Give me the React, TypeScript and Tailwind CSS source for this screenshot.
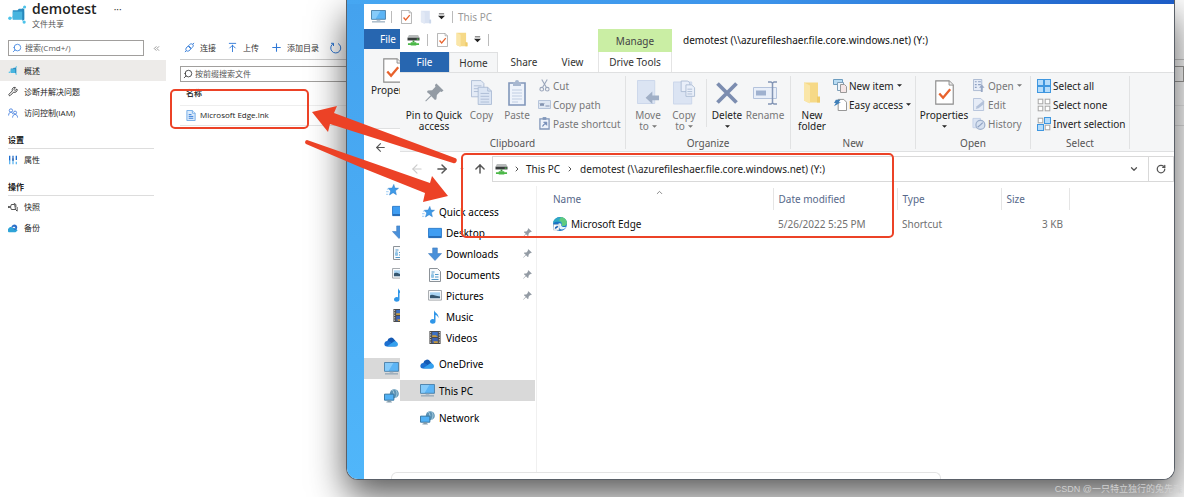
import type { ReactNode } from "react";
import {
  ArrowLeft,
  ArrowRight,
  ArrowUp,
  ArrowUpToLine,
  ChevronDown,
  ChevronRight,
  ChevronUp,
  ChevronsLeft,
  Plus,
  RotateCw,
  Search,
  Wrench,
} from "lucide-react";

type IconProps = { className?: string };

/* ---------- azure icons ---------- */

function FileShareIcon({ className }: IconProps) {
  return (
    <svg viewBox="0 0 20 20" className={className}>
      <path d="M3 14 8 10M15 4l2-2M15 16l2 2" stroke="#7fd3ee" strokeWidth="1" />
      <path d="M5 5.500h5l1.500-1.500H17v11H5z" fill="#2c8fc4" />
      <path d="M5 7h12v8.500H5z" fill="#48b5df" />
      <path d="M15 4h2v12h-2z" fill="#2787bb" />
      <circle cx="2" cy="14" r="1.800" fill="#4cc3ea" />
      <circle cx="17.500" cy="2" r="1.600" fill="#4cc3ea" />
      <circle cx="17" cy="18" r="1.700" fill="#4cc3ea" />
    </svg>
  );
}

function PeopleIcon({ className }: IconProps) {
  return (
    <svg viewBox="0 0 12 12" className={className} fill="none" stroke="#3f7bdc" strokeWidth="1">
      <circle cx="3.500" cy="3" r="2" />
      <path d="M.7 9c0-5 5-5 5.300-1.500" />
      <circle cx="8.500" cy="5.500" r="1.800" />
      <path d="M5.500 11.500c0-5 6-5 6 0" />
    </svg>
  );
}

function SlidersIcon({ className }: IconProps) {
  return (
    <svg viewBox="0 0 12 12" className={className} strokeWidth="1.600" fill="none">
      <path d="M2 1v6M6 1v2M10 1v5" stroke="#1f6fd0" />
      <path d="M2 7v4M6 5v6M10 8v3" stroke="#62b8f2" />
      <path d="M6 3v4" stroke="#174a9c" />
    </svg>
  );
}

function SnapshotIcon({ className }: IconProps) {
  return (
    <svg viewBox="0 0 12 12" className={className} fill="none" stroke="#333" strokeWidth="1">
      <path d="M1 6h2l1-3h4l1 6H4L3 6" />
      <path d="M7 1.500 9.500 3v3M9 9l2 2V6" />
      <circle cx="1" cy="6" r=".7" fill="#333" />
    </svg>
  );
}

function BackupIcon({ className }: IconProps) {
  return (
    <svg viewBox="0 0 12 12" className={className}>
      <path d="M1 11a2.600 2.600 0 0 1 0-4.600C2 4 4 4.500 5 5.500L10 7l1.500 2L9 11z" fill="#2fa4d8" />
      <path d="M4 5c1-4 6-4.500 7-.5.5 2-1 4-3 4L6 6.500h3C8.500 4 6 4 5 6z" fill="#2b6fc9" />
    </svg>
  );
}

function PlugIcon({ className }: IconProps) {
  return (
    <svg viewBox="0 0 12 12" className={className} fill="none" stroke="#2f78d6" strokeWidth="1">
      <path d="M1 11l1.500-1.500M9.500 2.500 11 1M2.500 9.500c-1.500-2 .5-4 2-5l3 3c-1 1.500-3 3.500-5 2z" />
      <path d="M5 4c1.500-2 3-2.500 4.500-1.500S9.500 6 8 7L5 4z" />
    </svg>
  );
}

function RefreshIcon({ className }: IconProps) {
  return (
    <svg viewBox="0 0 12 12" className={className} fill="none" stroke="#2f78d6" strokeWidth="1">
      <path d="M8 1.500a5 5 0 1 1-4.500 0M3.500 4V1.300H1" />
    </svg>
  );
}

function LinkFileIcon({ className }: IconProps) {
  return (
    <svg viewBox="0 0 10 12" className={className}>
      <path d="M.5.5h6l3 3v8h-9z" fill="#dcebfb" stroke="#6fa8e6" />
      <path d="M6.500.5v3h3" fill="#fff" stroke="#6fa8e6" />
      <path d="M2.500 5h3M2.500 7h5M2.500 9h5" stroke="#2f78d6" />
    </svg>
  );
}

/* ---------- explorer icons ---------- */

function PcIcon({ className }: IconProps) {
  return (
    <svg viewBox="0 0 16 14" className={className}>
      <path d="M.5.5h15v9.500H.5z" fill="#5cb4f5" stroke="#4a7fa8" />
      <path d="M1 1h9L5 9.500H1z" fill="#86cbfa" />
      <path d="M6 10.500h4v1H6z" fill="#9ab" />
      <path d="M1 12.300h14v1H1z" fill="#7793a8" />
    </svg>
  );
}

function CheckDocIcon({ className }: IconProps) {
  return (
    <svg viewBox="0 0 20 26" className={className}>
      <path d="M.8.8h14l4.400 4.400v20H.8z" fill="#fff" stroke="#8c8c8c" strokeWidth="1.200" />
      <path d="M14.800.8v4.400h4.400" fill="#eee" stroke="#8c8c8c" />
      <path d="m4.500 14 4 4.500 7.500-9" fill="none" stroke="#e8622c" strokeWidth="2.400" />
    </svg>
  );
}

function FolderIcon({ className, faded }: IconProps & { faded?: boolean }) {
  return (
    <svg viewBox="0 0 16 22" className={className}>
      <path d="M0 1h14v15h2v5H4L0 19z" fill={faded ? "#d9e2f2" : "#f6d987"} />
      <path d="M0 1l6 3v18l-6-3z" fill={faded ? "#e2e9f5" : "#fae6a8"} />
      <path d="M13 15h3v6h-3z" fill={faded ? "#cbd7ea" : "#efcb6a"} />
    </svg>
  );
}

function DriveIcon({ className }: IconProps) {
  return (
    <svg viewBox="0 0 14 13" className={className}>
      <path d="M2 1h10l1.500 3H.5z" fill="#b9bcbc" />
      <path d="M.5 4h13v3H.5z" fill="#383d3d" />
      <path d="M6 7h2v2H6z" fill="#3a9a3a" />
      <path d="M1 10h12v2H1zM4 9h6v3.500H4z" fill="#4cb848" />
      <path d="M10.500 5h2v1h-2z" fill="#5be05b" />
    </svg>
  );
}

function Caret({ className }: IconProps) {
  return (
    <svg viewBox="0 0 6 3" className={className ?? "h-[3px] w-[5px]"}>
      <path d="M0 0h6L3 3z" fill="currentColor" />
    </svg>
  );
}

function QatCaret() {
  return (
    <svg viewBox="0 0 8 7" className="h-[7px] w-[7px] text-[#222]">
      <path d="M1 0h6v1H1zM0 2.500h8L4 6.500z" fill="currentColor" />
    </svg>
  );
}

function PinIcon({ className }: IconProps) {
  return (
    <svg viewBox="0 0 20 20" className={className}>
      <path
        d="M12 .5 19.500 8l-2 1.500-1.500-.5-3.500 3.500-.5 4.500-1.500 1L6.700 14 1 19.500l-.7-.7L6 13 2 9.500l1-1.500 4.500-.5L11 4l-.5-2z"
        fill="#939ba4"
      />
    </svg>
  );
}

function CopyIcon({ className }: IconProps) {
  return (
    <svg viewBox="0 0 22 26" className={className} stroke="#a9b9d2" strokeWidth=".9">
      <path d="M.5.5h10l3 3v14H.5z" fill="#e4ebf6" />
      <path d="M3 6h8M3 9h8M3 12h8" />
      <path d="M7.500 7.500h10l4 4v14h-14z" fill="#dbe5f4" />
      <path d="M17.500 7.500v4h4M10 14h9M10 17h9M10 20h9M10 23h9" fill="none" />
    </svg>
  );
}

function PasteIcon({ className }: IconProps) {
  return (
    <svg viewBox="0 0 18 26" className={className}>
      <path d="M1 3h16v22H1z" fill="#eef3fb" stroke="#8197ba" strokeWidth="1.600" />
      <path d="M5 2h2a2 2 0 0 1 4 0h2v4H5z" fill="#a7b7d0" />
      <path d="M4 10h10M4 13h10M4 16h10M4 19h10M4 22h6" stroke="#c0cde2" />
    </svg>
  );
}

function CutIcon({ className }: IconProps) {
  return (
    <svg viewBox="0 0 12 14" className={className} fill="none" stroke="#9aa6bb" strokeWidth="1.200">
      <path d="M3 .5 8 9M9 .5 4 9" />
      <circle cx="3" cy="11" r="2" />
      <circle cx="9" cy="11" r="2" />
    </svg>
  );
}

function CopyPathIcon({ className }: IconProps) {
  return (
    <svg viewBox="0 0 13 9" className={className}>
      <path d="M.5.5h12v8H.5z" fill="#dfe7f3" stroke="#b6c4da" />
      <path d="m2 3 1 3 1-3 1 3 1-3M7.500 6h4" stroke="#6c7fa0" strokeWidth=".8" fill="none" />
    </svg>
  );
}

function PasteShortcutIcon({ className }: IconProps) {
  return (
    <svg viewBox="0 0 12 14" className={className}>
      <path d="M1 2h10v11H1z" fill="#eef3fb" stroke="#8197ba" strokeWidth="1.400" />
      <path d="M4 0h4v3H4z" fill="#8197ba" />
      <path d="M4 10.500c0-2 1-3 3-3M5 5.500h3.500V9z" fill="#6d87b3" stroke="#6d87b3" strokeWidth=".8" />
    </svg>
  );
}

function MoveToIcon({ className }: IconProps) {
  return (
    <svg viewBox="0 0 24 26" className={className}>
      <path d="M.5.5h18v24H.5z" fill="#dbe4f3" stroke="#cbd6ea" />
      <path d="M9 18.500 16 12v4h7v5h-7v4z" fill="#a0afc6" />
    </svg>
  );
}

function CopyToIcon({ className }: IconProps) {
  return (
    <svg viewBox="0 0 24 26" className={className}>
      <path d="M.5 1.500h19v23H.5z" fill="#dbe4f3" stroke="#cbd6ea" />
      <g fill="#e9eff9" stroke="#a9b9d2" strokeWidth=".9">
        <path d="M8.500.5h7l2 2v9h-9z" />
        <path d="M13.500 4.500h6l3 3v9h-9z" />
        <path d="M15 9h5M15 11.500h5M15 14h5" />
      </g>
    </svg>
  );
}

function DeleteIcon({ className }: IconProps) {
  return (
    <svg viewBox="0 0 22 22" className={className}>
      <path d="M1.500 1.500l19 19M20.500 1.500l-19 19" stroke="#7c8db0" strokeWidth="3.800" />
    </svg>
  );
}

function RenameIcon({ className }: IconProps) {
  return (
    <svg viewBox="0 0 25 24" className={className}>
      <path d="M.5 6.500h23v11H.5z" fill="#e9eff9" stroke="#b4c3dc" />
      <path d="M3 9.500h10v5H3z" fill="#9fb1cf" />
      <path
        d="M15 1h3l1.500 1L21 1h3M15 23h3l1.500-1 1.500 1h3M19.500 2v20"
        fill="none"
        stroke="#8395b5"
        strokeWidth="1.500"
      />
    </svg>
  );
}

function NewItemIcon({ className }: IconProps) {
  return (
    <svg viewBox="0 0 14 14" className={className}>
      <path d="M.5.5h9v5h-9z" fill="#b9dcf3" stroke="#6c9dc0" />
      <path d="M4.500 3.500h6v8h-6z" fill="#eef6fc" stroke="#7f9fb8" />
      <path d="M7.500 5.500h4l2 2v6h-6z" fill="#f5e6e6" stroke="#999" />
    </svg>
  );
}

function EasyAccessIcon({ className }: IconProps) {
  return (
    <svg viewBox="0 0 14 14" className={className}>
      <path d="M4.500 1.500h6l3 3v9h-9z" fill="#fff" stroke="#8c8c8c" />
      <path d="M2 2h5L5 4.500h2.500L0 9l2-3.500H0z" fill="#3f7fb8" />
    </svg>
  );
}

function OpenIcon({ className }: IconProps) {
  return (
    <svg viewBox="0 0 13 14" className={className}>
      <path d="M.5.5h9v12h-9z" fill="#e6ecf7" stroke="#a9b8d0" />
      <path d="M2 3h2M2 6h2M2 9h2M5.500 3h3M5.500 6h3" stroke="#8ea1c2" strokeWidth="1.200" />
      <path d="m9.500 6 3 3.500h-2V14h-2V9.500h-2z" fill="#97a7c4" />
    </svg>
  );
}

function EditIcon({ className }: IconProps) {
  return (
    <svg viewBox="0 0 13 14" className={className}>
      <path d="M.5.5h8l3 3v10H.5z" fill="#e6ecf7" stroke="#b4c2da" />
      <path d="m3 12 1-3 8-6.500v4L6 11z" fill="#b4c2da" />
    </svg>
  );
}

function HistoryIcon({ className }: IconProps) {
  return (
    <svg viewBox="0 0 14 14" className={className}>
      <path d="M.5 1.500h8v10h-8z" fill="#dbe4f3" stroke="#c3d0e6" />
      <circle cx="8.500" cy="8.500" r="4.800" fill="#d7e1f0" stroke="#9dafcb" strokeWidth="1.300" />
      <path d="m5.500 11 3-2.500L11 6" stroke="#8ea1c2" strokeWidth="1.300" fill="none" />
    </svg>
  );
}

const squares = [
  [0.5, 0.5],
  [7.5, 0.5],
  [0.5, 7.5],
  [7.5, 7.5],
];

function SelectIcon({ mode, className }: IconProps & { mode: "all" | "none" | "invert" }) {
  return (
    <svg viewBox="0 0 14 14" className={className}>
      {squares.map(([x, y], i) => {
        const on = mode === "all" || (mode === "invert" && (i === 1 || i === 2));
        const inset = on ? 0 : 0.7;
        return (
          <rect
            key={i}
            x={x + inset}
            y={y + inset}
            width={6 - inset * 2}
            height={6 - inset * 2}
            fill={on ? "#b5dcfb" : "#fff"}
            stroke={on ? "#3f97e0" : "#a6a6a6"}
          />
        );
      })}
    </svg>
  );
}

function StarIcon({ className }: IconProps) {
  return (
    <svg viewBox="0 0 15 14" className={className}>
      <path
        d="m9 .5 1.300 4.300 4.200.2-3.600 2.800 1.100 4.700-3.800-2.400-4.200 2.700 1.400-4.700L2.500 5l4.600-.2z"
        fill="#3e9ae8"
        stroke="#2d7ecb"
        strokeWidth=".6"
      />
      <path d="M1 6h2M0 9h3M0 12h2.500" stroke="#8cc4f3" />
    </svg>
  );
}

function DesktopIcon({ className }: IconProps) {
  return (
    <svg viewBox="0 0 15 13" className={className}>
      <path d="M.5 1.500h14v10H.5z" fill="#3f9df2" stroke="#2a79c9" />
      <path d="M1 10h13v1.500H1z" fill="#1f5fa8" />
    </svg>
  );
}

function DownloadIcon({ className }: IconProps) {
  return (
    <svg viewBox="0 0 15 15" className={className}>
      <path d="M5 1h5v6h4.500l-7 7.500L.5 7H5z" fill="#4a90d9" stroke="#3a78bd" strokeWidth=".6" />
    </svg>
  );
}

function DocumentIcon({ className }: IconProps) {
  return (
    <svg viewBox="0 0 12 14" className={className}>
      <path d="M.5.5h8l3 3v10H.5z" fill="#f8fafc" stroke="#8c9298" />
      <path d="M2.500 4h3M2.500 6h2M6 6.500h3.500M2.500 9h2M6 9h3.500M2.500 11.500h7" stroke="#4f97c9" />
      <path d="M2 6.500h3v3H2z" fill="#8fc3e6" />
    </svg>
  );
}

function PictureIcon({ className }: IconProps) {
  return (
    <svg viewBox="0 0 15 12" className={className}>
      <path d="M.5.5h14v10.500H.5z" fill="#fff" stroke="#9a9fa3" />
      <path d="M2 2.500h11v6.500H2z" fill="#a9d4f3" />
      <path d="M2 6c3-2 5 1 11 1v2H2z" fill="#35566f" />
    </svg>
  );
}

function MusicIcon({ className }: IconProps) {
  return (
    <svg viewBox="0 0 11 14" className={className}>
      <path d="M5 0c.5 3 5 3.500 4.500 8-.8-2-2-2.800-3-3v6.500c0 3-5.500 3-5.500 0 0-2 2.500-3 4-2z" fill="#2f96e8" />
    </svg>
  );
}

function VideoIcon({ className }: IconProps) {
  return (
    <svg viewBox="0 0 12 14" className={className}>
      <path d="M0 0h12v14H0z" fill="#4a4a4a" />
      <path d="M3 1h6v5.500H3z" fill="#3c70c4" />
      <path d="M3 7.500h6V13H3z" fill="#3c62b4" />
      <path d="M3 4.500h4l2 2H3zM4 11h5v2H5z" fill="#c89a3a" />
      <path d="M1.300 1v12M10.700 1v12" stroke="#ddd" strokeWidth="1" strokeDasharray="1.300 1.300" />
    </svg>
  );
}

function OneDriveIcon({ className }: IconProps) {
  return (
    <svg viewBox="0 0 16 11" className={className}>
      <path d="M3.500 4A4 4 0 0 1 11 2.800L13 5 6 9 1 7z" fill="#1459b3" />
      <path d="M3 10.500a3 3 0 0 1 .5-6.200c2.500 0 3 1 9.500 6.200z" fill="#1c6fd0" />
      <path d="M3 10.500 11 4.600c4-.5 5.500 4.400 2.500 5.900z" fill="#35a0ee" />
    </svg>
  );
}

function NetworkIcon({ className }: IconProps) {
  return (
    <svg viewBox="0 0 16 15" className={className}>
      <circle cx="11" cy="5" r="4.800" fill="#5d93b4" />
      <path d="M9 1c2 2 2 6 0 8M12 .5c3 3 2 7 0 9" stroke="#b9d9e8" strokeWidth=".9" fill="none" />
      <path d="M.5 5.500h10V12H.5z" fill="#52b1f5" stroke="#35739e" />
      <path d="M4 12.500h3v1H4zM2.500 14h6" stroke="#7a94a5" fill="#7a94a5" strokeWidth=".8" />
    </svg>
  );
}

function EdgeIcon({ className }: IconProps) {
  return (
    <svg viewBox="0 0 14 14" className={className}>
      <circle cx="7" cy="7" r="7" fill="#1b74c5" />
      <path d="M0 6C1-1.500 13-2 14 6c0 3-4 4-5.500 2.500C10 6 6 3 0 6z" fill="#2fa9c4" />
      <path d="M8 .1c4 .3 6 3.300 6 6.200-.3 2.700-4 3.500-5.500 2.200C10 6 8 4 6 3.500z" fill="#5fca80" />
      <path d="M4.500 8.500C5 6 7 5.500 8.500 7c-1.500 2 1.500 4 5 2.500C12 12 9 13 7 12z" fill="#e9f5fb" />
      <path d="M.5 7.500H6V13H.5z" fill="#fff" stroke="#9ab" strokeWidth=".5" />
      <path d="M1.800 12c0-2 .7-2.800 2-2.800V8.300l1.500 1.500-1.500 1.500" fill="#1d5fb0" />
    </svg>
  );
}

/* ---------- azure portal page ---------- */

function MenuItem({ icon, label, active }: { icon: ReactNode; label: string; active?: boolean }) {
  return (
    <li>
      <a
        href="#"
        className={`flex h-[21px] items-center gap-[6px] pl-2 text-[#222] ${active ? "bg-[#edebe9]" : ""}`}
      >
        <span className="flex w-[10px] justify-center">{icon}</span>
        {label}
      </a>
    </li>
  );
}

function MenuHeading({ children }: { children: ReactNode }) {
  return (
    <h2 className="mr-3 ml-2 flex h-[18px] items-center border-b border-[#ddd] font-semibold text-[#222]">
      {children}
    </h2>
  );
}

function AzurePortal() {
  return (
    <div className="font-['Open_Sans','Noto_Sans_CJK_SC',sans-serif] text-[8px] leading-[12px] text-[#333]">
      <header className="flex h-9 items-start gap-[5px] pl-2">
        <FileShareIcon className="mt-[5px] h-[19px] w-[19px]" />
        <div>
          <h1 className="h-[18px] text-[14px] leading-[18px] font-semibold text-[#222]">demotest</h1>
          <p className="text-[#555]">文件共享</p>
        </div>
        <button aria-label="更多" className="ml-3 text-[10px] leading-[18px]">···</button>
      </header>

      <div className="flex">
        <aside className="w-[166px] shrink-0 pt-1">
          <div className="flex items-center gap-2 pl-2">
            <label className="flex h-4 w-[136px] items-center gap-[3px] border border-[#a19f9d] px-[3px]">
              <Search className="h-[10px] w-[10px] shrink-0 -scale-x-100 text-[#3b82e0]" />
              <input
                aria-label="搜索"
                placeholder="搜索(Cmd+/)"
                className="w-full min-w-0 outline-none placeholder:text-[#555]"
              />
            </label>
            <button aria-label="折叠">
              <ChevronsLeft className="h-[9px] w-[9px] text-[#777]" />
            </button>
          </div>

          <ul className="mt-1">
            <MenuItem active icon={<FileShareIcon className="h-[9px] w-[10px]" />} label="概述" />
            <MenuItem icon={<Wrench className="h-[11px] w-[11px]" />} label="诊断并解决问题" />
            <MenuItem icon={<PeopleIcon className="h-[10px] w-[10px]" />} label="访问控制(IAM)" />
          </ul>
          <div className="mt-2">
            <MenuHeading>设置</MenuHeading>
            <ul>
              <MenuItem icon={<SlidersIcon className="h-[10px] w-[10px]" />} label="属性" />
            </ul>
          </div>
          <div className="mt-2">
            <MenuHeading>操作</MenuHeading>
            <ul>
              <MenuItem icon={<SnapshotIcon className="h-[10px] w-[10px]" />} label="快照" />
              <MenuItem icon={<BackupIcon className="h-[10px] w-[10px]" />} label="备份" />
            </ul>
          </div>
        </aside>

        <main className="min-w-0 flex-1 pl-[14px]">
          <div className="flex h-6 items-center gap-[11px] border-b border-[#ccc] pl-1 whitespace-nowrap">
            <button className="flex items-center gap-[5px]">
              <PlugIcon className="h-[11px] w-[11px]" />连接
            </button>
            <button className="flex items-center gap-[5px]">
              <ArrowUpToLine className="h-[11px] w-[11px] text-[#2f78d6]" />上传
            </button>
            <button className="flex items-center gap-1">
              <Plus className="h-[13px] w-[13px] text-[#2f78d6]" />添加目录
            </button>
            <button className="flex items-center gap-1">
              <RefreshIcon className="h-[12px] w-[12px]" />刷新
            </button>
          </div>
          <label className="mt-[6px] flex h-4 items-center gap-[2px] border border-[#a19f9d] px-[2px]">
            <Search className="h-[10px] w-[10px] shrink-0 -scale-x-100" />
            <input
              aria-label="按前缀搜索文件"
              placeholder="按前缀搜索文件"
              className="w-full min-w-0 outline-none placeholder:text-[#555]"
            />
          </label>
          <table className="w-full text-left">
            <thead>
              <tr className="h-[23px] border-b border-[#eee]">
                <th className="pl-[6px] font-semibold">名称</th>
              </tr>
            </thead>
            <tbody>
              <tr className="h-5 border-b border-[#e4e4e4]">
                <td className="pl-[6px]">
                  <a href="#" className="flex items-center gap-1 text-[#222]">
                    <LinkFileIcon className="h-[11px] w-[10px]" />
                    Microsoft Edge.lnk
                  </a>
                </td>
              </tr>
            </tbody>
          </table>
        </main>
      </div>
    </div>
  );
}

/* ---------- explorer ---------- */

const quickLinks = [
  { label: "Desktop", Icon: DesktopIcon, size: "h-[12px] w-[14px]", pinned: true },
  { label: "Downloads", Icon: DownloadIcon, size: "h-[14px] w-[14px]", pinned: true },
  { label: "Documents", Icon: DocumentIcon, size: "h-[14px] w-[12px]", pinned: true },
  { label: "Pictures", Icon: PictureIcon, size: "h-[11px] w-[14px]", pinned: true },
  { label: "Music", Icon: MusicIcon, size: "h-[14px] w-[11px]", pinned: false },
  { label: "Videos", Icon: VideoIcon, size: "h-[13px] w-[12px]", pinned: false },
];

function NavTree({ iconsOnly }: { iconsOnly?: boolean }) {
  return (
    <ul className="w-[135px]">
      <li className="flex h-[21px] items-center gap-1 pl-[22px]">
        <StarIcon className="h-[12px] w-[13px]" />
        {!iconsOnly && "Quick access"}
      </li>
      {quickLinks.map(({ label, Icon, size, pinned }) => (
        <li key={label} className="flex h-[21px] items-center gap-1 pr-[3px] pl-[27px]">
          <span className="flex w-[15px] justify-center">
            <Icon className={size} />
          </span>
          {!iconsOnly && label}
          {pinned && <PinIcon className="ml-auto h-[9px] w-[9px]" />}
        </li>
      ))}
      <li className="mt-[5px] flex h-[21px] items-center gap-1 pl-5">
        <OneDriveIcon className="h-[10px] w-[15px]" />
        {!iconsOnly && "OneDrive"}
      </li>
      <li className="mt-[6px] flex h-[21px] items-center gap-1 bg-[#d9d9d9] pl-5">
        <PcIcon className="h-[13px] w-[15px]" />
        {!iconsOnly && "This PC"}
      </li>
      <li className="mt-[6px] flex h-[21px] items-center gap-1 pl-5">
        <NetworkIcon className="h-[14px] w-[15px]" />
        {!iconsOnly && "Network"}
      </li>
    </ul>
  );
}

function Group({ label, width, children }: { label: string; width: string; children: ReactNode }) {
  return (
    <section className={`flex flex-col border-r border-[#e1e2e3] ${width}`}>
      <div className="flex flex-1 items-start">{children}</div>
      <h3 className="text-center leading-[12px] text-[#555]">{label}</h3>
    </section>
  );
}

type BigButtonProps = {
  icon: ReactNode;
  lines: string[];
  width: string;
  enabled?: boolean;
  caret?: "below" | "inline";
};

function BigButton({ icon, lines, width, enabled, caret }: BigButtonProps) {
  return (
    <button
      disabled={!enabled}
      className={`flex shrink-0 flex-col items-center leading-[11px] ${width} ${enabled ? "text-[#222]" : "text-[#777]"}`}
    >
      <span className="mb-1 flex h-[27px] items-center">{icon}</span>
      {lines.map((line, i) => (
        <span key={line} className="flex items-center gap-[3px] whitespace-nowrap">
          {line}
          {caret === "inline" && i === lines.length - 1 && <Caret />}
        </span>
      ))}
      {caret === "below" && <Caret className="mt-1 h-[3px] w-[5px]" />}
    </button>
  );
}

type SmallButtonProps = { icon: ReactNode; label: string; enabled?: boolean; caret?: boolean };

function SmallButton({ icon, label, enabled, caret }: SmallButtonProps) {
  return (
    <button
      disabled={!enabled}
      className={`flex h-[19px] items-center gap-[2px] whitespace-nowrap ${enabled ? "text-[#222]" : "text-[#777]"}`}
    >
      <span className="flex w-[14px] justify-center">{icon}</span>
      {label}
      {caret && <Caret className="ml-[1px] h-[3px] w-[5px]" />}
    </button>
  );
}

function Ribbon() {
  return (
    <div className="flex h-20 border-y border-[#dfe0e1] bg-[#f5f6f7] pt-[3px] pb-[2px]">
      <Group label="Clipboard" width="w-[226px]">
        <div className="flex pt-[3px] pl-[4px]">
          <BigButton enabled width="w-[60px]" lines={["Pin to Quick", "access"]} icon={<PinIcon className="h-[19px] w-[19px]" />} />
          <BigButton width="w-[35px]" lines={["Copy"]} icon={<CopyIcon className="h-[25px] w-[21px]" />} />
          <BigButton width="w-[36px]" lines={["Paste"]} icon={<PasteIcon className="h-[26px] w-[18px]" />} />
        </div>
        <div className="pl-[2px]">
          <SmallButton label="Cut" icon={<CutIcon className="h-[13px] w-[11px]" />} />
          <SmallButton label="Copy path" icon={<CopyPathIcon className="h-[9px] w-[13px]" />} />
          <SmallButton label="Paste shortcut" icon={<PasteShortcutIcon className="h-[13px] w-[11px]" />} />
        </div>
      </Group>

      <Group label="Organize" width="w-[165px]">
        <div className="flex pt-[3px] pl-1">
          <BigButton width="w-[36px]" caret="inline" lines={["Move", "to"]} icon={<MoveToIcon className="h-[25px] w-[23px]" />} />
          <BigButton width="w-[36px]" caret="inline" lines={["Copy", "to"]} icon={<CopyToIcon className="h-[26px] w-[23px]" />} />
          <div className="mr-[2px] ml-1 h-12 w-px bg-[#e1e2e3]" />
          <BigButton enabled width="w-[36px]" caret="below" lines={["Delete"]} icon={<DeleteIcon className="h-[22px] w-[22px]" />} />
          <BigButton width="w-[40px]" lines={["Rename"]} icon={<RenameIcon className="h-[24px] w-[25px]" />} />
        </div>
      </Group>

      <Group label="New" width="w-[125px]">
        <div className="pt-[3px] pl-1">
          <BigButton enabled width="w-[34px]" lines={["New", "folder"]} icon={<FolderIcon className="h-[23px] w-[16px]" />} />
        </div>
        <div className="pl-[4px]">
          <SmallButton enabled caret label="New item" icon={<NewItemIcon className="h-[14px] w-[14px]" />} />
          <SmallButton enabled caret label="Easy access" icon={<EasyAccessIcon className="h-[13px] w-[13px]" />} />
        </div>
      </Group>

      <Group label="Open" width="w-[115px]">
        <div className="pt-[3px] pl-[3px]">
          <BigButton enabled width="w-[50px]" caret="below" lines={["Properties"]} icon={<CheckDocIcon className="h-[25px] w-[19px]" />} />
        </div>
        <div className="pl-[3px]">
          <SmallButton caret label="Open" icon={<OpenIcon className="h-[13px] w-[12px]" />} />
          <SmallButton label="Edit" icon={<EditIcon className="h-[13px] w-[12px]" />} />
          <SmallButton label="History" icon={<HistoryIcon className="h-[13px] w-[14px]" />} />
        </div>
      </Group>

      <Group label="Select" width="w-[99px]">
        <div className="pl-[6px]">
          <SmallButton enabled label="Select all" icon={<SelectIcon mode="all" className="h-[14px] w-[14px]" />} />
          <SmallButton enabled label="Select none" icon={<SelectIcon mode="none" className="h-[14px] w-[14px]" />} />
          <SmallButton enabled label="Invert selection" icon={<SelectIcon mode="invert" className="h-[14px] w-[14px]" />} />
        </div>
      </Group>
    </div>
  );
}

function AddressBar() {
  return (
    <div className="flex h-[34px] items-center text-[#555]">
      <div className="flex w-[92px] shrink-0 items-center pl-[10px]">
        <button aria-label="Back" disabled className="text-[#ccc]">
          <ArrowLeft className="h-[14px] w-[14px]" />
        </button>
        <button aria-label="Forward" className="ml-[11px]">
          <ArrowRight strokeWidth={2.5} className="h-[14px] w-[14px]" />
        </button>
        <button aria-label="Recent" className="ml-[10px] text-[#999]">
          <ChevronDown className="h-[6px] w-[6px]" />
        </button>
        <button aria-label="Up" className="ml-2">
          <ArrowUp strokeWidth={2.5} className="h-[14px] w-[14px]" />
        </button>
      </div>
      <div className="flex h-[26px] flex-1 items-center border border-[#d9d9d9] text-[#222]">
        <DriveIcon className="ml-[2px] h-[12px] w-[13px]" />
        <ChevronRight strokeWidth={3} className="mr-[5px] ml-[5px] h-2 w-2 text-[#555]" />
        <a href="#">This PC</a>
        <ChevronRight strokeWidth={3} className="mx-[6px] h-2 w-2 text-[#555]" />
        <a href="#">demotest (\\azurefileshaer.file.core.windows.net) (Y:)</a>
        <button aria-label="Previous locations" className="mr-[9px] ml-auto text-[#555]">
          <ChevronDown strokeWidth={3} className="h-[10px] w-[10px]" />
        </button>
        <button
          aria-label="Refresh"
          className="flex h-full w-[25px] items-center justify-center border-l border-[#d9d9d9] text-[#555]"
        >
          <RotateCw strokeWidth={3} className="h-[10px] w-[10px]" />
        </button>
      </div>
    </div>
  );
}

function FileTable() {
  return (
    <table className="mt-[2px] w-[532px] table-fixed self-start text-left">
      <thead>
        <tr className="h-[22px] text-[#56688a]">
          <th className="relative w-[236px] border-r border-[#e5e5e5] pl-4 font-normal">
            Name
            <ChevronUp className="absolute top-0 left-[118px] h-[9px] w-[9px] text-[#666]" />
          </th>
          <th className="w-[124px] border-r border-[#e5e5e5] pl-[5px] font-normal">Date modified</th>
          <th className="w-[104px] border-r border-[#e5e5e5] pl-[5px] font-normal">Type</th>
          <th className="w-[68px] border-r border-[#e5e5e5] pl-[5px] font-normal">Size</th>
        </tr>
      </thead>
      <tbody>
        <tr className="h-[28px] text-[#707070]">
          <td className="pl-4 text-[#111]">
            <span className="flex items-center gap-1">
              <EdgeIcon className="h-[14px] w-[14px]" />
              Microsoft Edge
            </span>
          </td>
          <td className="pl-[5px]">5/26/2022 5:25 PM</td>
          <td className="pl-[5px]">Shortcut</td>
          <td className="pr-[6px] text-right">3 KB</td>
        </tr>
      </tbody>
    </table>
  );
}

function ExplorerWindow() {
  return (
    <div className="absolute top-[23px] right-0 bottom-0 left-[36px] flex flex-col bg-white">
      <div className="flex h-[25px] items-center">
        <div className="flex w-[198px] items-center pl-[7px]">
          <DriveIcon className="h-[12px] w-[13px]" />
          <span className="mx-[7px] h-3 w-px bg-[#bbb]" />
          <CheckDocIcon className="ml-[2px] h-[14px] w-[11px]" />
          <FolderIcon className="mr-[6px] ml-2 h-[15px] w-[12px]" />
          <QatCaret />
          <span className="ml-[7px] h-3 w-px bg-[#bbb]" />
        </div>
        <button className="h-[23px] w-[74px] self-end bg-[#caeea4] text-[#444]">Manage</button>
        <h2 className="ml-[11px] text-[#111]">demotest (\\azurefileshaer.file.core.windows.net) (Y:)</h2>
      </div>

      <div className="flex h-5 text-[#333]">
        <button className="w-[49px] bg-[#2766b0] text-white">File</button>
        <button className="-mb-px w-[49px] border-x border-t border-[#dfe0e1] bg-[#f5f6f7]">Home</button>
        <button className="w-[52px]">Share</button>
        <button className="mr-[3px] w-[45px]">View</button>
        <button className="w-[74px] border-x border-[#e4e4e4]">Drive Tools</button>
      </div>

      <Ribbon />
      <AddressBar />

      <div className="flex flex-1">
        <nav className="w-[137px] shrink-0 border-r border-[#f0f0f0] pt-[15px]">
          <NavTree />
        </nav>
        <FileTable />
      </div>
    </div>
  );
}

function BackgroundWindow() {
  return (
    <>
      <div className="flex h-[25px] items-center pl-[7px] text-[#999]">
        <PcIcon className="h-[13px] w-[15px]" />
        <span className="ml-[5px] h-3 w-px bg-[#bbb]" />
        <CheckDocIcon className="ml-[9px] h-[14px] w-[11px]" />
        <FolderIcon faded className="mr-[6px] ml-2 h-[14px] w-[12px]" />
        <QatCaret />
        <span className="mr-[5px] ml-[7px] h-3 w-px bg-[#bbb]" />
        This PC
      </div>
      <div className="w-[36px] overflow-hidden">
        <button className="h-5 w-full bg-[#2766b0] pr-1 text-right text-white">File</button>
        <div className="h-20 border-b border-[#dfe0e1] bg-[#f5f6f7] pt-[9px] pl-[7px]">
          <CheckDocIcon className="ml-3 h-[25px] w-[19px]" />
          <button aria-label="Properties" className="block whitespace-nowrap text-[#222]">
            Proper
          </button>
        </div>
        <button aria-label="Back" className="mt-3 ml-[10px] block text-[#555]">
          <ArrowLeft className="h-[13px] w-[13px]" />
        </button>
        <div className="mt-[25px]">
          <NavTree iconsOnly />
        </div>
      </div>
    </>
  );
}

function RemoteDesktop() {
  return (
    <div className="absolute top-0 right-[9px] bottom-[17px] left-[346px] flex flex-col overflow-hidden rounded-b-xl border border-t-0 border-[#5a6068] bg-white font-['Noto_Sans',sans-serif] text-[10px] leading-[14px] shadow-[0_16px_36px_0_rgba(0,0,0,0.65)]">
      <div className="h-1 shrink-0 bg-linear-to-r from-[#46a7f2] via-[#3c93ea] to-[#1d5cc6]" />
      <div className="flex min-h-0 flex-1">
        <div className="w-[17px] shrink-0 bg-linear-to-b from-[#44a2ee] to-[#50b6fa]" />
        <div className="relative min-w-0 flex-1 overflow-hidden">
          <BackgroundWindow />
          <ExplorerWindow />
          <div className="absolute bottom-0 left-[27px] h-[7px] w-[550px] rounded-t-md border border-b-0 border-[#e4e4e4] bg-white" />
        </div>
      </div>
    </div>
  );
}

function Annotations() {
  return (
    <div className="pointer-events-none absolute inset-0">
      <div className="absolute top-[89px] left-[170px] h-[40px] w-[139px] rounded-[5px] border-2 border-[#ec4226]" />
      <div className="absolute top-[153px] left-[461px] h-[85px] w-[433px] rounded-[5px] border-2 border-[#ec4226]" />
      <svg className="absolute top-0 left-0 h-[240px] w-[480px]" viewBox="0 0 480 240" fill="#ec4226">
        <path d="M312 112 337 106 334 113 455 158a2.500 2.500 0 0 1-2 5L330 124 328 132z" />
        <path d="M307 140 430 183 432 176 448 196 423 202 425 193 360 167 306 144a2.200 2.200 0 0 1 1-4z" />
      </svg>
    </div>
  );
}

export default function App() {
  return (
    <div className="relative min-h-screen overflow-hidden bg-white">
      <AzurePortal />
      <RemoteDesktop />
      <Annotations />
      <p className="absolute right-[2px] bottom-[2px] font-['Liberation_Sans','Noto_Sans_CJK_SC',sans-serif] text-[9px] leading-[12px] text-[#d0d0d0]">
        CSDN @一只特立独行的兔先森
      </p>
    </div>
  );
}
